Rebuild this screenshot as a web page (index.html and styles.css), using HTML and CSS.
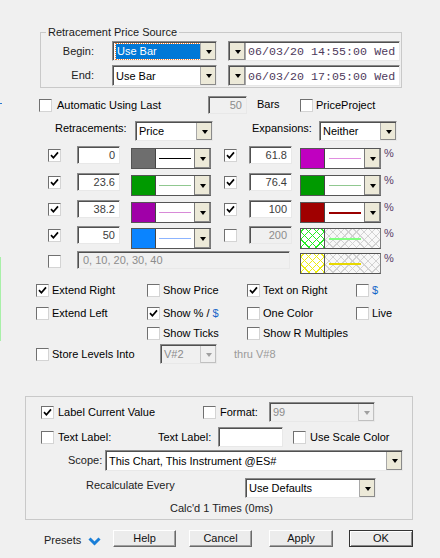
FILE: index.html
```html
<!DOCTYPE html>
<html>
<head>
<meta charset="utf-8">
<link rel="stylesheet" href="styles.css">
</head>
<body>
<span class="edge-green"></span>
<span class="edge-blue"></span>
<div class="dlg">
  <div class="grp grp-src">
    <span class="legend">Retracement Price Source</span>
    <div class="src-row">
      <span class="src-lbl">Begin:</span>
      <div class="sunk combo src-combo"><span class="val"><span class="sel">Use Bar</span></span><span class="dd"></span></div>
      <div class="sunk date"><span class="dd dd-left"></span><span class="date-txt">06/03/20 14:55:00 Wed</span></div>
    </div>
    <div class="src-row src-row2">
      <span class="src-lbl">End:</span>
      <div class="sunk combo src-combo"><span class="val">Use Bar</span><span class="dd"></span></div>
      <div class="sunk date"><span class="dd dd-left"></span><span class="date-txt">06/03/20 17:05:00 Wed</span></div>
    </div>
  </div>

  <div class="auto-row">
    <span class="cb cb-auto"></span>
    <span class="auto-lbl">Automatic Using Last</span>
    <span class="sunk num num-bars dis">50</span>
    <span class="bars-lbl">Bars</span>
    <span class="cb"></span>
    <span class="pp-lbl">PriceProject</span>
  </div>

  <div class="mode-row">
    <span class="ret-lbl">Retracements:</span>
    <div class="sunk combo mode-combo"><span class="val">Price</span><span class="dd"></span></div>
    <span class="exp-lbl">Expansions:</span>
    <div class="sunk combo mode-combo"><span class="val">Neither</span><span class="dd"></span></div>
  </div>

  <div class="levels">
    <div class="lvl-row r1">
      <span class="cb lcb"><svg width="9" height="9" viewBox="0 0 9 9"><path d="M1 4.2 L3.4 6.8 L8 1.4" fill="none" stroke="#000" stroke-width="1.7"/></svg></span>
      <span class="sunk num lnum">0</span>
      <div class="sw lsw"><span class="chip" style="background:#6e6e6e"></span><span class="ln"><i style="background:#000"></i></span><span class="dd"></span></div>
      <span class="cb rcb"><svg width="9" height="9" viewBox="0 0 9 9"><path d="M1 4.2 L3.4 6.8 L8 1.4" fill="none" stroke="#000" stroke-width="1.7"/></svg></span>
      <span class="sunk num rnum">61.8</span>
      <div class="sw rsw"><span class="chip" style="background:#c000c0"></span><span class="ln"><i style="background:#e08ee0"></i></span><span class="dd"></span></div>
      <span class="pct">%</span>
    </div>
    <div class="lvl-row r2">
      <span class="cb lcb"><svg width="9" height="9" viewBox="0 0 9 9"><path d="M1 4.2 L3.4 6.8 L8 1.4" fill="none" stroke="#000" stroke-width="1.7"/></svg></span>
      <span class="sunk num lnum">23.6</span>
      <div class="sw lsw"><span class="chip" style="background:#009a00"></span><span class="ln"><i style="background:#90c890"></i></span><span class="dd"></span></div>
      <span class="cb rcb"><svg width="9" height="9" viewBox="0 0 9 9"><path d="M1 4.2 L3.4 6.8 L8 1.4" fill="none" stroke="#000" stroke-width="1.7"/></svg></span>
      <span class="sunk num rnum">76.4</span>
      <div class="sw rsw"><span class="chip" style="background:#009a00"></span><span class="ln"><i style="background:#90c890"></i></span><span class="dd"></span></div>
      <span class="pct">%</span>
    </div>
    <div class="lvl-row r3">
      <span class="cb lcb"><svg width="9" height="9" viewBox="0 0 9 9"><path d="M1 4.2 L3.4 6.8 L8 1.4" fill="none" stroke="#000" stroke-width="1.7"/></svg></span>
      <span class="sunk num lnum">38.2</span>
      <div class="sw lsw"><span class="chip" style="background:#a000a8"></span><span class="ln"><i style="background:#d88ad8"></i></span><span class="dd"></span></div>
      <span class="cb rcb"><svg width="9" height="9" viewBox="0 0 9 9"><path d="M1 4.2 L3.4 6.8 L8 1.4" fill="none" stroke="#000" stroke-width="1.7"/></svg></span>
      <span class="sunk num rnum">100</span>
      <div class="sw rsw"><span class="chip" style="background:#a00000"></span><span class="ln"><i class="thick" style="background:#9a0000"></i></span><span class="dd"></span></div>
      <span class="pct">%</span>
    </div>
    <div class="lvl-row r4">
      <span class="cb lcb"><svg width="9" height="9" viewBox="0 0 9 9"><path d="M1 4.2 L3.4 6.8 L8 1.4" fill="none" stroke="#000" stroke-width="1.7"/></svg></span>
      <span class="sunk num lnum">50</span>
      <div class="sw lsw"><span class="chip" style="background:#0a84ff"></span><span class="ln"><i style="background:#8cb4ff"></i></span><span class="dd"></span></div>
      <span class="cb rcb"></span>
      <span class="sunk num rnum dis">200</span>
      <div class="sw rsw hatch"><span class="chip chip-green"></span><span class="ln"><i class="thick" style="background:#80ff80"></i></span></div>
      <span class="pct">%</span>
    </div>
    <div class="lvl-row r5">
      <span class="cb lcb"></span>
      <span class="sunk custom dis">0, 10, 20, 30, 40</span>
      <div class="sw rsw hatch hatch5"><span class="chip chip-yellow"></span><span class="ln"><i class="thick" style="background:#e8d800"></i></span></div>
      <span class="pct">%</span>
    </div>
  </div>

  <div class="opts">
    <div class="opt-row">
      <label class="opt c1"><span class="cb"><svg width="9" height="9" viewBox="0 0 9 9"><path d="M1 4.2 L3.4 6.8 L8 1.4" fill="none" stroke="#000" stroke-width="1.7"/></svg></span>Extend Right</label>
      <label class="opt c2"><span class="cb"></span>Show Price</label>
      <label class="opt c3"><span class="cb"><svg width="9" height="9" viewBox="0 0 9 9"><path d="M1 4.2 L3.4 6.8 L8 1.4" fill="none" stroke="#000" stroke-width="1.7"/></svg></span>Text on Right</label>
      <label class="opt c4"><span class="cb"></span><span class="blue">$</span></label>
    </div>
    <div class="opt-row row-b">
      <label class="opt c1"><span class="cb"></span>Extend Left</label>
      <label class="opt c2"><span class="cb"><svg width="9" height="9" viewBox="0 0 9 9"><path d="M1 4.2 L3.4 6.8 L8 1.4" fill="none" stroke="#000" stroke-width="1.7"/></svg></span>Show % / <span class="blue">$</span></label>
      <label class="opt c3"><span class="cb"></span>One Color</label>
      <label class="opt c4"><span class="cb"></span>Live</label>
    </div>
    <div class="opt-row row-c">
      <span class="opt c1"></span>
      <label class="opt c2"><span class="cb"></span>Show Ticks</label>
      <label class="opt c3"><span class="cb"></span>Show R Multiples</label>
    </div>
    <div class="opt-row row-d">
      <label class="opt c1 store"><span class="cb"></span>Store Levels Into</label>
      <div class="sunk combo dis v-combo"><span class="val">V#2</span><span class="dd"></span></div>
      <span class="thru">thru V#8</span>
    </div>
  </div>

  <div class="grp grp-lbl">
    <div class="g-row g1">
      <label class="opt lcv"><span class="cb"><svg width="9" height="9" viewBox="0 0 9 9"><path d="M1 4.2 L3.4 6.8 L8 1.4" fill="none" stroke="#000" stroke-width="1.7"/></svg></span>Label Current Value</label>
      <label class="opt fmt"><span class="cb"></span>Format:</label>
      <div class="sunk combo dis fmt-combo"><span class="val">99</span><span class="dd"></span></div>
    </div>
    <div class="g-row g2">
      <label class="opt tl"><span class="cb"></span>Text Label:</label>
      <span class="tl2">Text Label:</span>
      <span class="sunk tl-inp"></span>
      <label class="opt usc"><span class="cb"></span>Use Scale Color</label>
    </div>
    <div class="g-row g3">
      <span class="scope-lbl">Scope:</span>
      <div class="sunk combo scope-combo"><span class="val">This Chart, This Instrument @ES#</span><span class="dd"></span></div>
    </div>
    <div class="g-row g4">
      <span class="recalc-lbl">Recalculate Every</span>
      <div class="sunk combo recalc-combo"><span class="val">Use Defaults</span><span class="dd"></span></div>
    </div>
    <div class="g-row g5">
      <span class="calcd">Calc'd 1 Times (0ms)</span>
    </div>
  </div>

  <div class="btn-row">
    <span class="presets">Presets</span>
    <svg class="chev" width="13" height="9" viewBox="0 0 13 9"><path d="M1.5 1.5 L6.5 6.5 L11.5 1.5" fill="none" stroke="#1a7fd8" stroke-width="3"/></svg>
    <span class="btn b-help">Help</span>
    <span class="btn b-cancel">Cancel</span>
    <span class="btn b-apply">Apply</span>
    <span class="btn def b-ok">OK</span>
  </div>
</div>
</body>
</html>
```

FILE: styles.css
```css
* { box-sizing: border-box; }
body {
  margin: 0;
  width: 440px;
  height: 558px;
  overflow: hidden;
  position: relative;
  background: #f0f0f0;
  color: #000;
  font: 11px/13px "Liberation Sans", Arial, sans-serif;
}
.edge-green { position: absolute; left: 0; top: 257px; width: 1px; height: 84px; background: #a8f0a8; }
.edge-blue { position: absolute; left: 0; top: 103px; width: 2px; height: 1px; background: #2a7ad0; }

.dlg { padding-top: 32px; }

/* generic widgets */
.cb {
  width: 13px; height: 13px; flex: none;
  background: #fff;
  border: 1px solid;
  border-color: #707070 #d4d4d4 #d4d4d4 #707070;
  display: flex; align-items: center; justify-content: center;
}
.cb svg { display: block; }

.sunk {
  border: 1px solid;
  border-color: #8a8a8a #e8e8e8 #e8e8e8 #8a8a8a;
  box-shadow: inset 1px 1px 0 #505050;
  padding: 1px 0 0 1px;
  background: #fff;
}
.combo { display: flex; align-items: stretch; }
.combo .val {
  flex: 1; min-width: 0;
  padding-left: 2px;
  display: flex; align-items: center;
  white-space: nowrap; overflow: hidden;
}
.dd {
  width: 16px; flex: none;
  background: #ece9d8;
  border-left: 1px solid #a8a8a8;
  box-shadow: inset -1px -1px 0 #8a8a8a;
  display: flex; align-items: center; justify-content: center;
}
.dd::after {
  content: "";
  border-left: 3px solid transparent;
  border-right: 3px solid transparent;
  border-top: 4px solid #000;
}
.combo.dis { background: #f0f0f0; color: #8c8c8c; }
.combo.dis .dd { background: #f0f0f0; box-shadow: inset -1px -1px 0 #c0c0c0; border-left-color: #c8c8c8; }
.combo.dis .dd::after { border-top-color: #a0a0a0; }

.sel {
  display: flex; align-items: center;
  width: 84px; height: 15px;
  padding-left: 1px;
  background: #0078d7; color: #fff;
  outline: 1px dotted #f07828;
}

/* source group */
.grp { position: relative; border: 1px solid #c9c9c9; }
.legend {
  position: absolute; left: 5px; top: -7px;
  padding: 0 2px;
  background: #f0f0f0;
  color: #1a1a1a;
}
.grp-src { margin-left: 40px; width: 362px; height: 56px; padding-top: 8px; }
.src-row { display: flex; align-items: center; height: 20px; }
.src-row2 { margin-top: 4px; height: 21px; }
.src-lbl { width: 53px; text-align: right; color: #222; }
.src-combo { margin-left: 18px; width: 105px; height: 100%; }
.date { display: flex; margin-left: 11px; width: 172px; height: 100%; }
.dd-left { border-left: 0; border-right: 1px solid #a8a8a8; }
.date-txt {
  display: flex; align-items: center;
  padding-left: 2px;
  font: 11.6px "Liberation Mono", monospace;
  color: #4e3a5c;
  letter-spacing: 0.05px;
}

/* automatic row */
.auto-row { display: flex; align-items: center; height: 18px; margin-top: 8px; }
.cb-auto { margin-left: 39px; }
.auto-lbl { margin-left: 5px; width: 151px; }
.num {
  height: 18px;
  display: flex; align-items: center; justify-content: flex-end;
  padding-right: 4px;
  color: #3c3c3c;
}
.num.dis, .custom.dis { background: #f0f0f0; color: #8c8c8c; }
.num-bars { width: 39px; }
.bars-lbl { margin-left: 10px; width: 43px; margin-top: -2px; }
.pp-lbl { margin-left: 3px; }

/* mode row */
.mode-row { display: flex; align-items: flex-start; height: 20px; margin-top: 7px; }
.ret-lbl { margin-left: 55px; width: 80px; padding-top: 1px; }
.exp-lbl { margin-left: 39px; width: 67px; padding-top: 1px; }
.mode-combo { width: 78px; height: 20px; }

/* levels */
.levels { margin-top: 5px; }
.lvl-row { display: flex; align-items: flex-start; }
.r1, .r2 { height: 27px; }
.r3 { height: 26px; }
.r4 { height: 25px; }
.r5 { height: 22px; }
.lcb { margin-left: 48px; margin-top: 3px; }
.rcb { margin-left: 13px; margin-top: 3px; }
.lnum { margin-left: 16px; width: 43px; }
.rnum { margin-left: 12px; width: 43px; }
.sw {
  display: flex;
  height: 21px;
  margin-top: 2px;
  border: 1px solid;
  border-color: #555 #7a7a7a #555 #555;
  background: #fff;
}
.lsw { margin-left: 11px; width: 80px; }
.rsw { margin-left: 8px; width: 81px; }
.chip { width: 24px; flex: none; border-right: 1px solid #444; }
.ln { flex: 1; display: flex; align-items: center; justify-content: center; }
.ln i { display: block; width: 32px; height: 1px; }
.ln i.thick { height: 2px; }
.sw .dd { border-left: 1px solid #7a7a7a; }
.pct { margin-left: 3px; margin-top: 1px; color: #5a3c66; }

.hatch .ln {
  background:
    repeating-linear-gradient(45deg, #d2d2d2 0 1px, transparent 1px 5.5px),
    repeating-linear-gradient(-45deg, #d2d2d2 0 1px, transparent 1px 5.5px),
    #f8f8f8;
  justify-content: flex-start;
  padding-left: 4px;
}
.chip-green {
  background:
    repeating-linear-gradient(45deg, #22ee22 0 1px, transparent 1px 5.5px),
    repeating-linear-gradient(-45deg, #22ee22 0 1px, transparent 1px 5.5px),
    #fff;
}
.chip-yellow {
  background:
    repeating-linear-gradient(45deg, #eeee10 0 1px, transparent 1px 5.5px),
    repeating-linear-gradient(-45deg, #eeee10 0 1px, transparent 1px 5.5px),
    #fff;
}
.hatch .chip { border-right: 1px solid #555; }
.custom {
  margin-left: 16px; width: 213px; height: 18px;
  display: flex; align-items: center;
  padding-left: 5px;
}
.hatch5 { margin-left: 10px; }
.r5 .lcb { margin-top: 4px; }

/* options */
.opts { margin-top: 7px; }
.opt-row { display: flex; align-items: center; height: 20px; }
.row-b { margin-top: 3px; }
.row-d { margin-top: 1px; }
.opt { display: flex; align-items: center; gap: 3px; white-space: nowrap; }
.opt.c1 { margin-left: 36px; width: 111px; }
.opt.c2 { width: 100px; }
.opt.c3 { width: 109px; }
.opt.store { width: 124px; }
.blue { color: #1565c8; }
.v-combo { width: 57px; height: 20px; }
.thru { margin-left: 17px; color: #9a9a9a; }

/* label group */
.grp-lbl { margin-top: 32px; margin-left: 25px; width: 388px; height: 124px; padding-top: 5px; }
.g-row { display: flex; align-items: center; }
.g1 { height: 20px; }
.lcv { margin-left: 15px; width: 162px; gap: 4px; }
.fmt { width: 66px; gap: 4px; }
.fmt-combo { width: 106px; height: 20px; }
.g2 { height: 20px; margin-top: 5px; }
.tl { margin-left: 15px; width: 117px; gap: 4px; }
.tl2 { width: 60px; }
.tl-inp { width: 65px; height: 20px; }
.usc { margin-left: 10px; gap: 4px; }
.g3 { height: 21px; margin-top: 3px; }
.scope-lbl { margin-left: 42px; width: 37px; color: #222; }
.scope-combo { width: 298px; height: 21px; }
.g4 { height: 20px; margin-top: 7px; align-items: flex-start; }
.recalc-lbl { margin-left: 60px; width: 159px; padding-top: 1px; color: #222; }
.recalc-combo { width: 131px; height: 20px; }
.g5 { margin-top: 4px; }
.calcd { margin-left: 144px; color: #222; }

/* buttons */
.btn-row { display: flex; align-items: flex-start; margin-top: 10px; height: 17px; }
.presets { margin-left: 44px; width: 44px; margin-top: 4px; color: #222; }
.chev { margin-top: 7px; flex: none; }
.btn {
  height: 17px;
  display: flex; align-items: center; justify-content: center;
  background: #ececec;
  border: 1px solid;
  border-color: #fff #6a6a6a #6a6a6a #fff;
  box-shadow: inset -1px -1px 0 #a0a0a0;
  color: #111;
}
.b-help { margin-left: 12px; width: 63px; }
.b-cancel { margin-left: 13px; width: 63px; }
.b-apply { margin-left: 17px; width: 64px; }
.b-ok { margin-left: 16px; width: 64px; }
.btn.def {
  border-color: #333;
  box-shadow: inset 1px 1px 0 #fff, inset -1px -1px 0 #8a8a8a;
}
```
